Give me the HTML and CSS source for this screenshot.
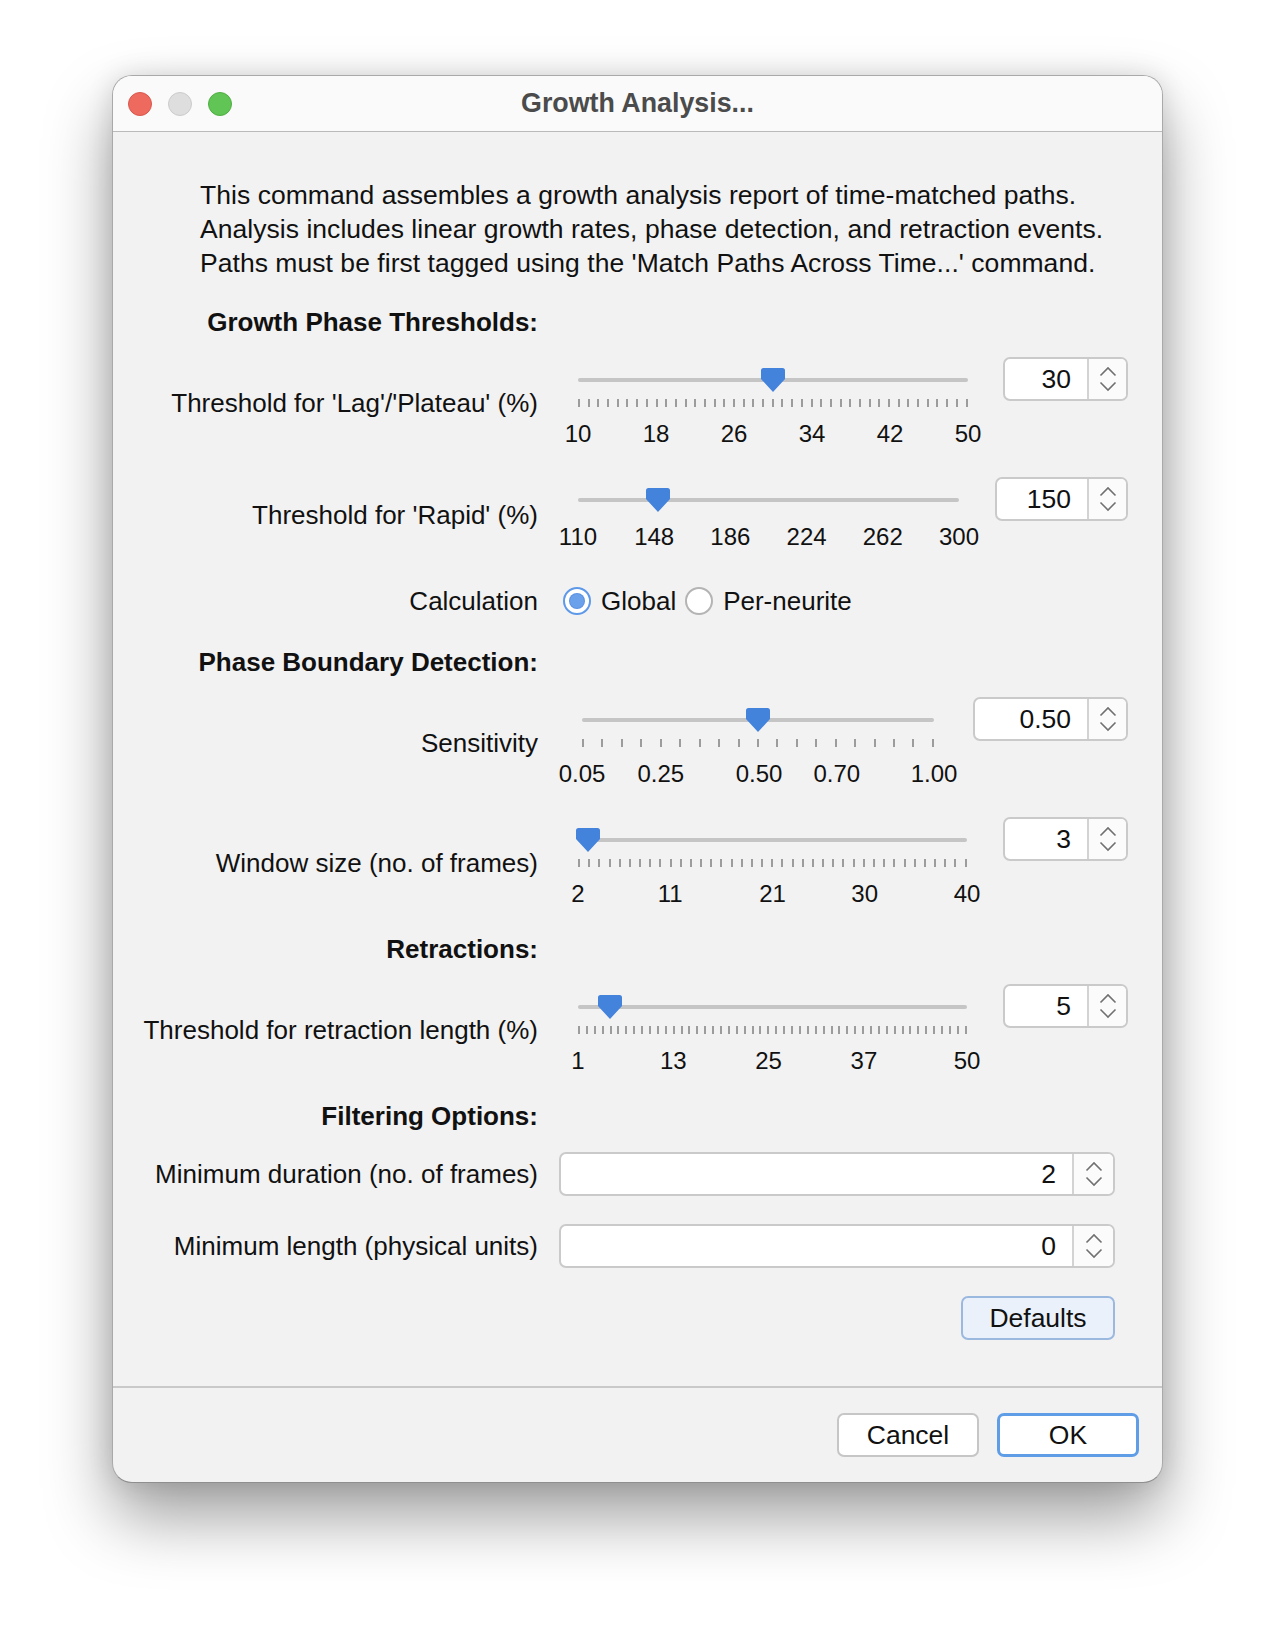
FILE: index.html
```html
<!DOCTYPE html>
<html lang="en">
<head>
<meta charset="utf-8">
<title>Growth Analysis...</title>
<link rel="stylesheet" href="styles.css">
</head>
<body>
<div class="window">
  <div class="titlebar">
    <div class="lights"><span class="light red"></span><span class="light gray"></span><span class="light green"></span></div>
    <div class="title">Growth Analysis...</div>
    <div></div>
  </div>

  <div class="content">
    <p class="desc">This command assembles a growth analysis report of time-matched paths.<br>Analysis includes linear growth rates, phase detection, and retraction events.<br>Paths must be first tagged using the 'Match Paths Across Time...' command.</p>

    <div class="row head head-first"><div class="label">Growth Phase Thresholds:</div></div>

    <div class="row slider-row after-head">
      <div class="label">Threshold for 'Lag'/'Plateau' (%)</div>
      <div class="slider s-lag">
        <div class="rail"><div class="track"></div><div class="thumb" style="left:50%"><svg viewBox="0 0 24 24" width="24" height="24"><path d="M2.5 0H21.5A2.5 2.5 0 0 1 24 2.5V11L12 24L0 11V2.5A2.5 2.5 0 0 1 2.5 0Z" fill="#4383dc"/></svg></div></div>
        <div class="ticks"><i></i><i></i><i></i><i></i><i></i><i></i><i></i><i></i><i></i><i></i><i></i><i></i><i></i><i></i><i></i><i></i><i></i><i></i><i></i><i></i><i></i><i></i><i></i><i></i><i></i><i></i><i></i><i></i><i></i><i></i><i></i><i></i><i></i><i></i><i></i><i></i><i></i><i></i><i></i><i></i><i></i></div>
        <div class="scale"><span style="left:0%">10</span><span style="left:20%">18</span><span style="left:40%">26</span><span style="left:60%">34</span><span style="left:80%">42</span><span style="left:100%">50</span></div>
      </div>
      <div class="spin s125"><div class="val">30</div><div class="arrows"><svg viewBox="0 0 18 26" width="18" height="26"><path d="M1.5 9.5L9 2L16.5 9.5M1.5 16.5L9 24L16.5 16.5" fill="none" stroke="#707070" stroke-width="1.6"/></svg></div></div>
    </div>

    <div class="row slider-row no-ticks">
      <div class="label">Threshold for 'Rapid' (%)</div>
      <div class="slider s-rapid">
        <div class="rail"><div class="track"></div><div class="thumb" style="left:21.05%"><svg viewBox="0 0 24 24" width="24" height="24"><path d="M2.5 0H21.5A2.5 2.5 0 0 1 24 2.5V11L12 24L0 11V2.5A2.5 2.5 0 0 1 2.5 0Z" fill="#4383dc"/></svg></div></div>
        <div class="scale"><span style="left:0%">110</span><span style="left:20%">148</span><span style="left:40%">186</span><span style="left:60%">224</span><span style="left:80%">262</span><span style="left:100%">300</span></div>
      </div>
      <div class="spin s133"><div class="val">150</div><div class="arrows"><svg viewBox="0 0 18 26" width="18" height="26"><path d="M1.5 9.5L9 2L16.5 9.5M1.5 16.5L9 24L16.5 16.5" fill="none" stroke="#707070" stroke-width="1.6"/></svg></div></div>
    </div>

    <div class="row radio-row">
      <div class="label">Calculation</div>
      <div class="choices">
        <span class="radio checked"></span><span class="choice-text">Global</span>
        <span class="radio"></span><span class="choice-text">Per-neurite</span>
      </div>
    </div>

    <div class="row head head-after-radio"><div class="label">Phase Boundary Detection:</div></div>

    <div class="row slider-row after-head">
      <div class="label">Sensitivity</div>
      <div class="slider s-sens">
        <div class="rail"><div class="track"></div><div class="thumb" style="left:49.9%"><svg viewBox="0 0 24 24" width="24" height="24"><path d="M2.5 0H21.5A2.5 2.5 0 0 1 24 2.5V11L12 24L0 11V2.5A2.5 2.5 0 0 1 2.5 0Z" fill="#4383dc"/></svg></div></div>
        <div class="ticks"><i></i><i></i><i></i><i></i><i></i><i></i><i></i><i></i><i></i><i></i><i></i><i></i><i></i><i></i><i></i><i></i><i></i><i></i><i></i></div>
        <div class="scale"><span style="left:0%">0.05</span><span style="left:22.4%">0.25</span><span style="left:50.3%">0.50</span><span style="left:72.4%">0.70</span><span style="left:100%">1.00</span></div>
      </div>
      <div class="spin s155"><div class="val">0.50</div><div class="arrows"><svg viewBox="0 0 18 26" width="18" height="26"><path d="M1.5 9.5L9 2L16.5 9.5M1.5 16.5L9 24L16.5 16.5" fill="none" stroke="#707070" stroke-width="1.6"/></svg></div></div>
    </div>

    <div class="row slider-row">
      <div class="label">Window size (no. of frames)</div>
      <div class="slider s-win">
        <div class="rail"><div class="track"></div><div class="thumb" style="left:2.63%"><svg viewBox="0 0 24 24" width="24" height="24"><path d="M2.5 0H21.5A2.5 2.5 0 0 1 24 2.5V11L12 24L0 11V2.5A2.5 2.5 0 0 1 2.5 0Z" fill="#4383dc"/></svg></div></div>
        <div class="ticks"><i></i><i></i><i></i><i></i><i></i><i></i><i></i><i></i><i></i><i></i><i></i><i></i><i></i><i></i><i></i><i></i><i></i><i></i><i></i><i></i><i></i><i></i><i></i><i></i><i></i><i></i><i></i><i></i><i></i><i></i><i></i><i></i><i></i><i></i><i></i><i></i><i></i><i></i><i></i></div>
        <div class="scale"><span style="left:0%">2</span><span style="left:23.7%">11</span><span style="left:50%">21</span><span style="left:73.7%">30</span><span style="left:100%">40</span></div>
      </div>
      <div class="spin s125"><div class="val">3</div><div class="arrows"><svg viewBox="0 0 18 26" width="18" height="26"><path d="M1.5 9.5L9 2L16.5 9.5M1.5 16.5L9 24L16.5 16.5" fill="none" stroke="#707070" stroke-width="1.6"/></svg></div></div>
    </div>

    <div class="row head"><div class="label">Retractions:</div></div>

    <div class="row slider-row after-head">
      <div class="label">Threshold for retraction length (%)</div>
      <div class="slider s-retr">
        <div class="rail"><div class="track"></div><div class="thumb" style="left:8.16%"><svg viewBox="0 0 24 24" width="24" height="24"><path d="M2.5 0H21.5A2.5 2.5 0 0 1 24 2.5V11L12 24L0 11V2.5A2.5 2.5 0 0 1 2.5 0Z" fill="#4383dc"/></svg></div></div>
        <div class="ticks"><i></i><i></i><i></i><i></i><i></i><i></i><i></i><i></i><i></i><i></i><i></i><i></i><i></i><i></i><i></i><i></i><i></i><i></i><i></i><i></i><i></i><i></i><i></i><i></i><i></i><i></i><i></i><i></i><i></i><i></i><i></i><i></i><i></i><i></i><i></i><i></i><i></i><i></i><i></i><i></i><i></i><i></i><i></i><i></i><i></i><i></i><i></i><i></i><i></i><i></i></div>
        <div class="scale"><span style="left:0%">1</span><span style="left:24.5%">13</span><span style="left:49%">25</span><span style="left:73.5%">37</span><span style="left:100%">50</span></div>
      </div>
      <div class="spin s125"><div class="val">5</div><div class="arrows"><svg viewBox="0 0 18 26" width="18" height="26"><path d="M1.5 9.5L9 2L16.5 9.5M1.5 16.5L9 24L16.5 16.5" fill="none" stroke="#707070" stroke-width="1.6"/></svg></div></div>
    </div>

    <div class="row head"><div class="label">Filtering Options:</div></div>

    <div class="row field-row after-head">
      <div class="label">Minimum duration (no. of frames)</div>
      <div class="spin wide"><div class="val">2</div><div class="arrows"><svg viewBox="0 0 18 26" width="18" height="26"><path d="M1.5 9.5L9 2L16.5 9.5M1.5 16.5L9 24L16.5 16.5" fill="none" stroke="#707070" stroke-width="1.6"/></svg></div></div>
    </div>

    <div class="row field-row">
      <div class="label">Minimum length (physical units)</div>
      <div class="spin wide"><div class="val">0</div><div class="arrows"><svg viewBox="0 0 18 26" width="18" height="26"><path d="M1.5 9.5L9 2L16.5 9.5M1.5 16.5L9 24L16.5 16.5" fill="none" stroke="#707070" stroke-width="1.6"/></svg></div></div>
    </div>

    <div class="row actions-row">
      <button class="btn btn-defaults">Defaults</button>
    </div>
  </div>

  <div class="footer">
    <button class="btn btn-cancel">Cancel</button>
    <button class="btn btn-ok">OK</button>
  </div>
</div>
</body>
</html>
```

FILE: styles.css
```css
* { box-sizing: border-box; }

html { background: #ffffff; }

body {
  margin: 0;
  padding: 75px 0 149px 112px;
  min-height: 1632px;
  background: #ffffff;
  font-family: "Liberation Sans", Arial, Helvetica, sans-serif;
  font-size: 26px;
  color: #111;
}

.window {
  width: 1051px;
  height: 1408px;
  border: 1px solid #a9a9a9;
  border-bottom-color: #8f8f8f;
  border-radius: 20px;
  background: #f2f2f2;
  display: flex;
  flex-direction: column;
  overflow: hidden;
  box-shadow: 0 34px 66px rgba(0,0,0,0.38), 0 0 26px rgba(0,0,0,0.12);
}

/* title bar */
.titlebar {
  flex: none;
  height: 56px;
  background: #fafafa;
  border-bottom: 1px solid #bababa;
  display: grid;
  grid-template-columns: 1fr auto 1fr;
  align-items: center;
}
.lights { display: flex; gap: 16px; padding-left: 15px; }
.light { width: 24px; height: 24px; border-radius: 50%; }
.light.red { background: #ee6a5f; border: 1px solid #d8574c; }
.light.gray { background: #dedede; border: 1px solid #cbcbcb; }
.light.green { background: #61c555; border: 1px solid #50ad43; }
.title { font-weight: bold; font-size: 26.8px; color: #4b4b4b; }

/* content */
.content {
  flex: 1;
  display: flex;
  flex-direction: column;
  padding-right: 34px;
}
.desc { margin: 46px 0 0 87px; line-height: 34px; font-size: 26.5px; letter-spacing: 0.04px; }

.row { display: flex; }
.label {
  flex: none;
  width: 425px;
  text-align: right;
  line-height: 34px;
  white-space: nowrap;
}
.head .label { font-weight: bold; font-size: 26px; }
.head { margin-top: 23px; }
.head.head-first { margin-top: 25px; }
.head.head-after-radio { margin-top: 27px; }

/* slider rows */
.slider-row { align-items: flex-start; margin-top: 28px; }
.slider-row.after-head { margin-top: 18px; }
.slider-row .label { margin-top: 29px; }
.slider-row.no-ticks .label { margin-top: 21px; }

.slider { flex: none; padding: 11px 12px 0; margin-left: 28px; }
.s-lag { width: 414px; }
.s-rapid { width: 405px; }
.s-sens { width: 376px; margin-left: 32px; }
.s-win { width: 413px; }
.s-retr { width: 413px; }

.rail { position: relative; height: 24px; padding-top: 10px; }
.track { height: 4px; border-radius: 2px; background: #c5c5c5; }
.thumb { position: absolute; top: 0; width: 24px; height: 24px; margin-left: -12px; }
.thumb svg { display: block; }

.ticks { display: flex; justify-content: space-between; height: 8px; margin-top: 7px; }
.ticks i { display: block; width: 2px; height: 8px; background: #9c9c9c; }

.scale { position: relative; height: 30px; margin-top: 12px; font-size: 24px; line-height: 30px; }
.no-ticks .scale { margin-top: 10px; }
.scale span { position: absolute; top: 0; transform: translateX(-50%); white-space: nowrap; }

/* spinners */
.spin {
  flex: none;
  margin-left: auto;
  display: flex;
  height: 44px;
  border: 2px solid #cacaca;
  border-radius: 7px;
  background: #fff;
  overflow: hidden;
  font-size: 26.5px;
}
.spin .val { flex: 1; text-align: right; padding-right: 16px; line-height: 40px; }
.spin .arrows {
  flex: none;
  width: 39px;
  border-left: 2px solid #d3d3d3;
  background: #fbfbfb;
  display: flex;
  align-items: center;
  justify-content: center;
}
.spin .arrows svg { display: block; }
.s125 { width: 125px; }
.s133 { width: 133px; }
.s155 { width: 155px; }
.spin.wide { width: 556px; margin-left: 21px; margin-right: 13px; }
.spin.wide .arrows { width: 41px; }

/* radio row */
.radio-row { margin-top: 32px; align-items: center; }
.choices { display: flex; align-items: center; margin-left: 25px; }
.radio {
  flex: none;
  width: 28px;
  height: 28px;
  border-radius: 50%;
  background: #fff;
  border: 2px solid #b4b4b4;
  display: grid;
  place-items: center;
}
.radio.checked { border-color: #5d99e8; }
.radio.checked::after {
  content: "";
  width: 14px;
  height: 14px;
  border-radius: 50%;
  background: #6ba0ea;
  box-shadow: 0 0 0 1px #5a92e2;
}
.choice-text { margin: 0 9px 0 10px; line-height: 34px; }

/* filter rows */
.field-row { align-items: center; margin-top: 28px; }
.field-row.after-head { margin-top: 19px; }

/* buttons */
.btn {
  font: inherit;
  font-size: 26.5px;
  color: #111;
  height: 44px;
  border-radius: 7px;
  background: #fff;
  padding: 0;
  display: flex;
  align-items: center;
  justify-content: center;
}
.actions-row { justify-content: flex-end; margin-top: 28px; }
.btn-defaults {
  width: 154px;
  margin-right: 13px;
  background: #eaf1fb;
  border: 2px solid #9bb9df;
}

.footer {
  flex: none;
  height: 96px;
  border-top: 2px solid #c9c9c9;
  display: flex;
  justify-content: flex-end;
  gap: 18px;
  padding: 25px 23px 0 0;
}
.btn-cancel { width: 142px; border: 2px solid #c6c6c6; }
.btn-ok { width: 142px; border: 3px solid #5f9de7; }
```
